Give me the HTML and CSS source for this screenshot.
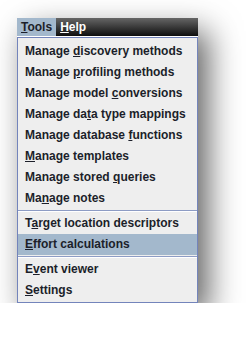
FILE: index.html
```html
<!DOCTYPE html>
<html lang="en">
<head>
    <meta charset="UTF-8">
    <title>Tools menu</title>
    <link rel="stylesheet" href="styles.css">
</head>
<body>
    <div class="frame">
        <div class="menubar">
            <span class="title active"><u>T</u>ools</span>
            <span class="title"><u>H</u>elp</span>
        </div>
        <div class="menu">
            <div class="item">Manage <u>d</u>iscovery methods</div>
            <div class="item">Manage <u>p</u>rofiling methods</div>
            <div class="item">Manage model <u>c</u>onversions</div>
            <div class="item">Manage da<u>t</u>a type mappings</div>
            <div class="item">Manage database <u>f</u>unctions</div>
            <div class="item"><u>M</u>anage templates</div>
            <div class="item">Manage stored <u>q</u>ueries</div>
            <div class="item">Ma<u>n</u>age notes</div>
            <div class="sep"></div>
            <div class="item">T<u>a</u>rget location descriptors</div>
            <div class="item selected"><u>E</u>ffort calculations</div>
            <div class="sep"></div>
            <div class="item">E<u>v</u>ent viewer</div>
            <div class="item"><u>S</u>ettings</div>
        </div>
    </div>
</body>
</html>
```

FILE: styles.css
```css
body {
    margin: 0;
    background: #ffffff;
    font-family: "Liberation Sans", Arial, sans-serif;
    font-size: 12px;
    font-weight: bold;
    color: #1c1f2a;
}
u {
    text-decoration-thickness: 1px;
    text-underline-offset: 1px;
}
.frame {
    margin: 18px 0 0 17px;
    width: 181px;
    box-shadow: 10px 13px 30px rgba(0, 0, 0, 0.62);
}
.menubar {
    display: flex;
    height: 18px;
    background: linear-gradient(#666666, #0e0e0e);
    border-bottom: 1px solid #ffffff;
}
.title {
    padding: 0 4px;
    line-height: 18px;
    color: #ffffff;
}
.title.active {
    background: #a3b8cc;
    color: #1c1f2a;
}
.menu {
    border: 1px solid #7384bb;
    background: #eeeeee;
    padding: 3px 0 1px;
}
.item {
    height: 21px;
    line-height: 21px;
    padding-left: 7px;
    white-space: nowrap;
}
.item.selected {
    background: #a3b8cc;
}
.sep {
    border-top: 1px solid #8d9cc4;
    border-bottom: 1px solid #ffffff;
    margin: 1px 0;
}
```
